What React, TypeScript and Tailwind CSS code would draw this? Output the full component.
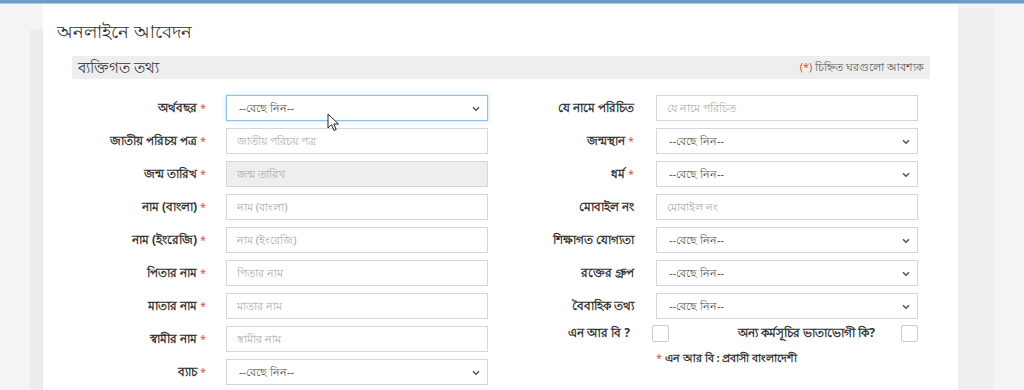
import React from "react";

type Field = {
  label: string;
  required?: boolean;
  kind: "text" | "select" | "date";
  placeholder?: string;
  focused?: boolean;
};

const leftFields: Field[] = [
  { label: "অর্থবছর", required: true, kind: "select", focused: true },
  { label: "জাতীয় পরিচয় পত্র", required: true, kind: "text", placeholder: "জাতীয় পরিচয় পত্র" },
  { label: "জন্ম তারিখ", required: true, kind: "date", placeholder: "জন্ম তারিখ" },
  { label: "নাম (বাংলা)", required: true, kind: "text", placeholder: "নাম (বাংলা)" },
  { label: "নাম (ইংরেজি)", required: true, kind: "text", placeholder: "নাম (ইংরেজি)" },
  { label: "পিতার নাম", required: true, kind: "text", placeholder: "পিতার নাম" },
  { label: "মাতার নাম", required: true, kind: "text", placeholder: "মাতার নাম" },
  { label: "স্বামীর নাম", required: true, kind: "text", placeholder: "স্বামীর নাম" },
  { label: "ব্যাচ", required: true, kind: "select" },
];

const rightFields: Field[] = [
  { label: "যে নামে পরিচিত", kind: "text", placeholder: "যে নামে পরিচিত" },
  { label: "জন্মস্থান", required: true, kind: "select" },
  { label: "ধর্ম", required: true, kind: "select" },
  { label: "মোবাইল নং", kind: "text", placeholder: "মোবাইল নং" },
  { label: "শিক্ষাগত যোগ্যতা", kind: "select" },
  { label: "রক্তের গ্রুপ", kind: "select" },
  { label: "বৈবাহিক তথ্য", kind: "select" },
];

const Chevron = () => (
  <svg width="8" height="6" viewBox="0 0 8 6" className="absolute right-[7px] top-[10px]">
    <path d="M1 1.2 L4 4.2 L7 1.2" fill="none" stroke="#555" strokeWidth="1.6" />
  </svg>
);

const Cursor = () => (
  <svg width="13" height="19" viewBox="0 0 13 19" className="absolute left-[100px] top-[17px]">
    <path d="M1 1 L1 15 L4.5 11.6 L7 17.5 L9.2 16.6 L6.8 11 L11.5 11 Z" fill="#fff" stroke="#222" strokeWidth="1" strokeLinejoin="round" />
  </svg>
);

const Control = ({ f }: { f: Field }) => {
  if (f.kind === "select") {
    return (
      <div
        className={`relative h-[26px] w-[262px] border bg-white flex items-center pl-[12px] text-[11px] text-[#555] ${
          f.focused ? "border-[#8fc2e4] shadow-[0_0_4px_rgba(102,175,233,0.45)]" : "border-[#d6d6d6]"
        }`}
      >
        --বেছে নিন--
        <Chevron />
        {f.focused && <Cursor />}
      </div>
    );
  }
  return (
    <div
      className={`h-[26px] w-[262px] border border-[#d6d6d6] flex items-center pl-[10px] text-[11px] text-[#aaa] ${
        f.kind === "date" ? "bg-[#eeeeee]" : "bg-white"
      }`}
    >
      {f.placeholder}
    </div>
  );
};

const Row = ({ f, gap }: { f: Field; gap: string }) => (
  <div className={`flex items-center h-[26px] ${gap}`}>
    <div className="w-[134px] text-right text-[12px] font-bold text-[#333] whitespace-nowrap">
      {f.label}
      {f.required && <span className="text-[#d9534f] font-normal text-[11px]"> *</span>}
    </div>
    <Control f={f} />
  </div>
);

export default function App() {
  return (
    <div
      className="w-[1024px] h-[390px] overflow-hidden bg-[#f4f4f4] flex flex-col"
      style={{ fontFamily: '"Noto Sans", "Liberation Sans", sans-serif' }}
    >
      <div className="h-[4px] bg-[#6a9cc9] border-b border-[#a9c9e4] shrink-0" />
      <div className="flex flex-1">
        <div className="w-[43px] flex justify-end pt-[26px]">
          <div className="w-[13px] h-full bg-[#ececec]" />
        </div>
        <div className="w-[915px] bg-white pt-[16px] pl-[14px]">
          <div className="text-[18px] text-[#333] leading-[22px]">অনলাইনে আবেদন</div>
          <div className="ml-[15px] mt-[14px] w-[858px] h-[23px] bg-[#eeeeee] flex items-center justify-between px-[6px]">
            <span className="text-[15px] text-[#333]">ব্যক্তিগত তথ্য</span>
            <span className="text-[11px] text-[#555]">
              <span className="text-[#d9534f]">(*)</span> চিহ্নিত ঘরগুলো আবশ্যক
            </span>
          </div>
          <div className="ml-[15px] mt-[16px] flex gap-[12px]">
            <div className="flex flex-col gap-[7px]">
              {leftFields.map((f) => (
                <Row key={f.label} f={f} gap="gap-[20px]" />
              ))}
            </div>
            <div className="w-[418px] flex flex-col gap-[7px]">
              {rightFields.map((f) => (
                <Row key={f.label} f={f} gap="gap-[22px]" />
              ))}
              <div className="flex items-center h-[22px] -mt-[4px]">
                <div className="w-[130px] text-right text-[12px] font-bold text-[#333] whitespace-nowrap">এন আর বি ?</div>
                <div className="ml-[22px] w-[17px] h-[17px] border border-[#ccc] rounded-[2px] bg-white" />
                <div className="flex-1 text-right text-[12px] font-bold text-[#333] whitespace-nowrap">
                  অন্য কর্মসূচির ভাতাভোগী কি?
                </div>
                <div className="ml-[26px] w-[17px] h-[17px] border border-[#ccc] rounded-[2px] bg-white" />
              </div>
              <div className="pl-[156px] text-[11px] font-bold text-[#333] -mt-[1px]">
                <span className="text-[#d9534f] font-normal">*</span> এন আর বি : প্রবাসী বাংলাদেশী
              </div>
            </div>
          </div>
        </div>
        <div className="w-[35px] bg-[#eeeeee] mt-[4px]" />
        <div className="flex-1" />
      </div>
    </div>
  );
}
